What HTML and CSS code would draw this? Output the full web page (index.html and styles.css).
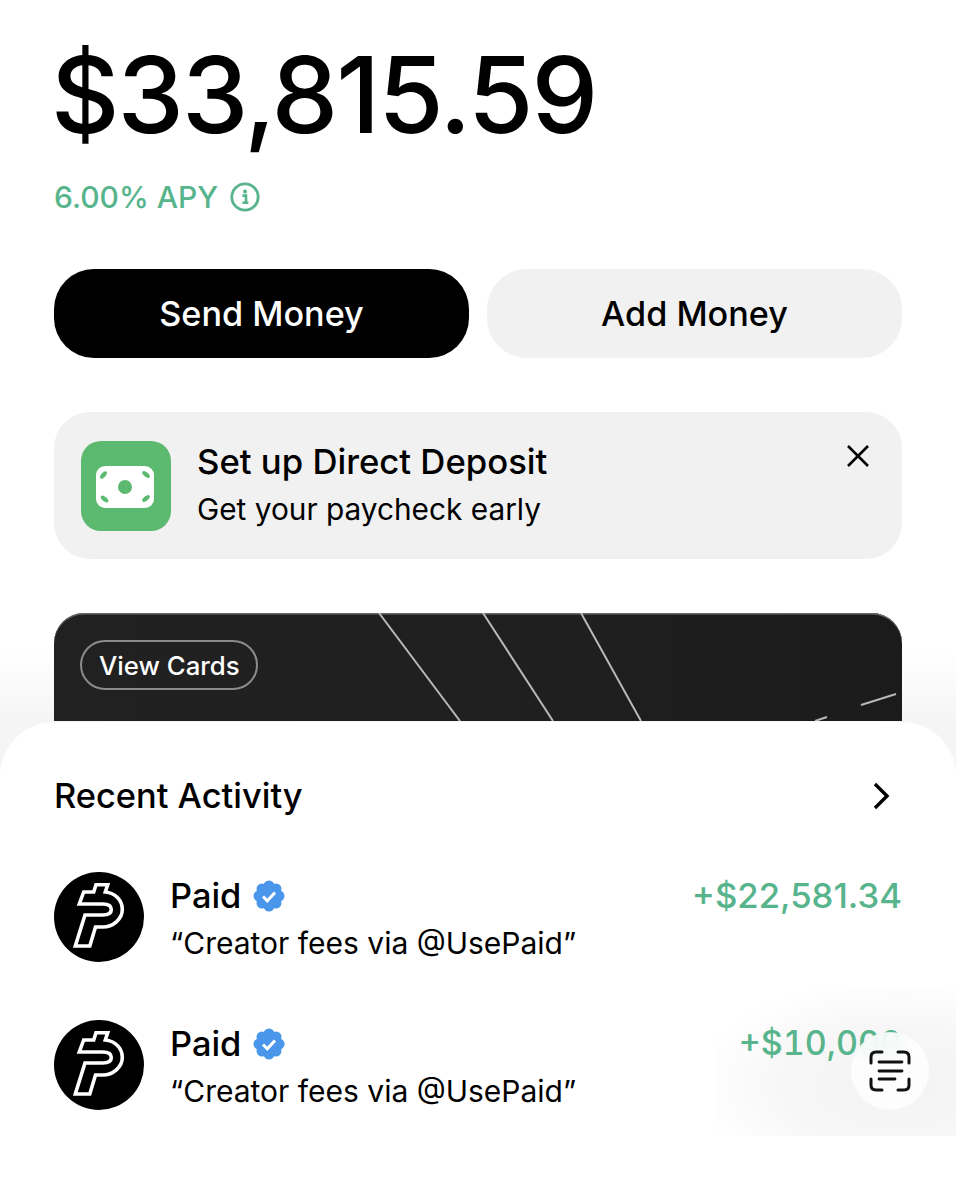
FILE: index.html
```html
<!DOCTYPE html>
<html lang="en">
<head>
<meta charset="utf-8">
<title>Balance</title>
<link rel="stylesheet" href="styles.css">
</head>
<body>
<div class="page">
  <section class="top">
    <h1 class="balance">$33,815.59</h1>
    <div class="apy"><span>6.00% APY</span>
      <svg class="info" viewBox="0 0 30 30"><circle cx="15" cy="15" r="13.2" fill="none" stroke="#57b48c" stroke-width="2.8"/><circle cx="15" cy="9.400" r="2" fill="#57b48c"/><path d="M12.400 13.600h3.600v7M12.400 20.800h6" fill="none" stroke="#57b48c" stroke-width="2.600"/></svg>
    </div>
    <div class="actions">
      <button class="btn btn-dark">Send Money</button>
      <button class="btn btn-light">Add Money</button>
    </div>
    <div class="promo">
      <div class="promo-icon">
        <svg viewBox="0 0 90 90" width="90" height="90"><rect x="15" y="25" width="58" height="42" rx="9" fill="#fff"/><circle cx="44" cy="46" r="7" fill="#5cb970"/><g fill="#5cb970"><ellipse cx="22.500" cy="34" rx="4.500" ry="2.200" transform="rotate(-50 22.500 34)"/><ellipse cx="65" cy="33.500" rx="4.500" ry="2.200" transform="rotate(40 65 33.500)"/><ellipse cx="23.500" cy="58" rx="4.500" ry="2.200" transform="rotate(40 23.500 58)"/><ellipse cx="65" cy="57.500" rx="4.500" ry="2.200" transform="rotate(-40 65 57.500)"/></g></svg>
      </div>
      <div class="promo-text">
        <div class="promo-title">Set up Direct Deposit</div>
        <div class="promo-sub">Get your paycheck early</div>
      </div>
      <svg class="close" viewBox="0 0 24 24"><path d="M2 2l20 20M22 2L2 22" fill="none" stroke="#000" stroke-width="2.600"/></svg>
    </div>
    <div class="card">
      <svg class="card-lines" viewBox="0 0 848 108" width="848" height="108"><path d="M325 0l81 108M429 0l70 108M527 0l60 108M807 92l35-11M761 108l12-4" fill="none" stroke="#b8b8b8" stroke-width="2"/></svg>
      <span class="card-pill">View Cards</span>
    </div>
  </section>
  <section class="sheet">
    <div class="scan-fade"></div>
    <div class="sheet-head">
      <h2 class="sheet-title">Recent Activity</h2>
      <svg class="chev" viewBox="0 0 18 28"><path d="M3 2l12 12L3 26" fill="none" stroke="#000" stroke-width="3.400"/></svg>
    </div>
    <div class="row">
      <svg class="avatar" viewBox="0 0 90 90"><circle cx="45" cy="45" r="45" fill="#000"/><path d="M29.700 20H39.700L42 12.700H53.700L51.300 20C61 21 68.300 28 68.300 37.500C68.300 47 59 55 48.700 55H41.500L35.800 74H21.300L31 43H48.700C54 43 57.300 41 57.300 37.500C57.300 34 54 32 48.700 32H25.300Z" fill="none" stroke="#fff" stroke-width="3.600"/></svg>
      <div class="row-main">
        <div class="row-name">Paid <svg class="badge" viewBox="0 0 32 32"><g fill="#4a96ea"><circle cx="16" cy="16" r="12"/><circle cx="16" cy="6" r="5.500"/><circle cx="23" cy="9" r="5.500"/><circle cx="26" cy="16" r="5.500"/><circle cx="23" cy="23" r="5.500"/><circle cx="16" cy="26" r="5.500"/><circle cx="9" cy="23" r="5.500"/><circle cx="6" cy="16" r="5.500"/><circle cx="9" cy="9" r="5.500"/></g><path d="M10 16.500l4.300 4.300L22 12.500" fill="none" stroke="#fff" stroke-width="3"/></svg></div>
        <div class="row-note">“Creator fees via @UsePaid”</div>
      </div>
      <div class="amount">+$22,581.34</div>
    </div>
    <div class="row">
      <svg class="avatar" viewBox="0 0 90 90"><circle cx="45" cy="45" r="45" fill="#000"/><path d="M29.700 20H39.700L42 12.700H53.700L51.300 20C61 21 68.300 28 68.300 37.500C68.300 47 59 55 48.700 55H41.500L35.800 74H21.300L31 43H48.700C54 43 57.300 41 57.300 37.500C57.300 34 54 32 48.700 32H25.300Z" fill="none" stroke="#fff" stroke-width="3.600"/></svg>
      <div class="row-main">
        <div class="row-name">Paid <svg class="badge" viewBox="0 0 32 32"><g fill="#4a96ea"><circle cx="16" cy="16" r="12"/><circle cx="16" cy="6" r="5.500"/><circle cx="23" cy="9" r="5.500"/><circle cx="26" cy="16" r="5.500"/><circle cx="23" cy="23" r="5.500"/><circle cx="16" cy="26" r="5.500"/><circle cx="9" cy="23" r="5.500"/><circle cx="6" cy="16" r="5.500"/><circle cx="9" cy="9" r="5.500"/></g><path d="M10 16.500l4.300 4.300L22 12.500" fill="none" stroke="#fff" stroke-width="3"/></svg></div>
        <div class="row-note">“Creator fees via @UsePaid”</div>
      </div>
      <div class="amount amount-tabular">+$10,000</div>
    </div>
  </section>
  <button class="scan" aria-label="Scan">
    <svg viewBox="0 0 42 42" width="42" height="42"><path d="M2 13V7q0-5 5-5h6M29 2h6q5 0 5 5v6M2 29v6q0 5 5 5h6M29 40h6q5 0 5-5v-6" fill="none" stroke="#111" stroke-width="3" stroke-linecap="round"/><path d="M10 12h23M10 21h23M10 29h16" fill="none" stroke="#111" stroke-width="2.800" stroke-linecap="round"/></svg>
  </button>
</div>
</body>
</html>
```
FILE: styles.css
```css
* { box-sizing: border-box; }
html, body { margin: 0; padding: 0; }
body { font-family: "Inter", "Liberation Sans", sans-serif; color: #000; background: #fff; }
.page { position: relative; width: 956px; height: 1199px; overflow: hidden; background: linear-gradient(#fff 0, #fff 650px, #f5f5f5 722px, #f5f5f5 790px, #fff 790px); }
.top { padding: 36px 54px 0; }
.balance { margin: 0 0 0 -3px; font-size: 106px; line-height: 118px; font-weight: 500; letter-spacing: -2px; white-space: nowrap; }
.apy { display: flex; align-items: center; gap: 12px; margin-top: 19px; height: 48px; font-size: 30px; font-weight: 500; color: #57b48c; }
.info { width: 30px; height: 30px; }
.actions { display: flex; gap: 18px; margin-top: 48px; }
.btn { flex: 1; height: 89px; border: 0; border-radius: 40px; font: 500 34.200px "Inter", sans-serif; }
.btn-dark { background: #000; color: #fff; }
.btn-light { background: #f1f1f1; color: #000; }
.promo { display: flex; align-items: flex-start; margin-top: 54px; height: 147px; padding: 29px 27px; background: #f1f1f1; border-radius: 36px; }
.promo-icon { width: 90px; height: 90px; border-radius: 20px; background: #5cb970; flex: none; }
.promo-text { flex: 1; margin-left: 26px; }
.promo-title { font-size: 34.700px; line-height: 44px; font-weight: 500; margin-top: -2px; }
.promo-sub { font-size: 29.800px; line-height: 40px; margin-top: 6px; }
.close { width: 24px; height: 24px; margin: 3px 5px 0 0; }
.card { position: relative; margin-top: 54px; height: 108px; background: linear-gradient(90deg, #212121, #1f1f1f 60%, #1b1b1b); border-radius: 30px 30px 0 0; box-shadow: inset 0 1.500px 0 #6a6a6a; overflow: hidden; }
.card-lines { display: block; position: absolute; left: 0; top: 0; }
.card-pill { position: absolute; left: 26px; top: 27px; height: 50px; padding: 0 16px 0 17px; display: flex; align-items: center; border: 2px solid #8b8b8b; border-radius: 25px; color: #fff; font-size: 25.800px; font-weight: 500; }
.sheet { position: relative; margin-top: 1px; height: 477px; padding: 0 54px; background: #fff; border-radius: 54px 54px 0 0; }
.sheet-head { position: relative; display: flex; align-items: center; justify-content: space-between; padding-top: 52px; height: 96px; }
.sheet-title { margin: 0; font-size: 34.400px; line-height: 44px; font-weight: 500; }
.chev { width: 18px; height: 28px; margin-right: 12px; }
.row { position: relative; display: flex; align-items: flex-start; height: 90px; margin-top: 58px; }
.sheet-head + .row { margin-top: 54px; }
.avatar { width: 90px; height: 90px; flex: none; }
.row-main { flex: 1; margin-left: 26px; }
.row-name { display: flex; align-items: center; gap: 12px; font-size: 34.400px; line-height: 44px; font-weight: 500; margin-top: 2px; }
.badge { width: 32px; height: 32px; }
.row-note { font-size: 30px; line-height: 40px; margin-top: 5px; }
.amount { font-size: 34.700px; line-height: 44px; font-weight: 500; color: #57b48c; margin-top: 1px; }
.amount-tabular { font-size: 34px; font-variant-numeric: tabular-nums; }
.scan-fade { position: absolute; right: 0; top: 268px; width: 240px; height: 146px; background: radial-gradient(ellipse at 75% 65%, #f3f3f3 0, #f7f7f7 45%, rgba(255,255,255,0) 80%); }
.scan { position: absolute; left: 851px; top: 1032px; width: 78px; height: 78px; padding: 0; border: 0; border-radius: 50%; background: rgba(255,255,255,.82); -webkit-backdrop-filter: blur(8px); backdrop-filter: blur(8px); display: flex; align-items: center; justify-content: center; }
```
